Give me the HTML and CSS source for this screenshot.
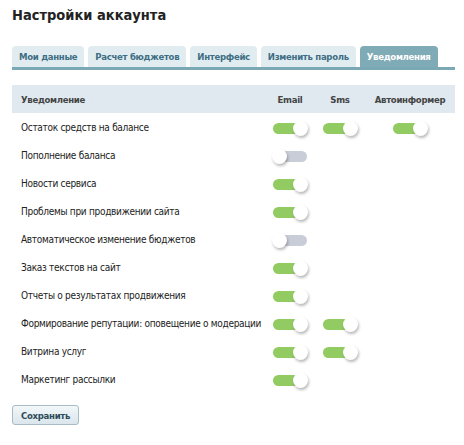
FILE: index.html
```html
<!DOCTYPE html>
<html lang="ru">
<head>
<meta charset="utf-8">
<link rel="stylesheet" href="styles.css">
</head>
<body>
<div class="page">
  <h1 class="title">Настройки аккаунта</h1>
  <div class="tabs">
    <div class="tab">Мои данные</div>
    <div class="tab">Расчет бюджетов</div>
    <div class="tab">Интерфейс</div>
    <div class="tab">Изменить пароль</div>
    <div class="tab active">Уведомления</div>
  </div>
  <table class="grid">
    <thead>
      <tr><th class="name">Уведомление</th><th class="c-email">Email</th><th class="c-sms">Sms</th><th class="c-auto">Автоинформер</th></tr>
    </thead>
    <tbody>
      <tr><td class="name">Остаток средств на балансе</td><td><span class="tg on"></span></td><td><span class="tg on"></span></td><td><span class="tg on"></span></td></tr>
      <tr><td class="name">Пополнение баланса</td><td><span class="tg"></span></td><td></td><td></td></tr>
      <tr><td class="name">Новости сервиса</td><td><span class="tg on"></span></td><td></td><td></td></tr>
      <tr><td class="name">Проблемы при продвижении сайта</td><td><span class="tg on"></span></td><td></td><td></td></tr>
      <tr><td class="name">Автоматическое изменение бюджетов</td><td><span class="tg"></span></td><td></td><td></td></tr>
      <tr><td class="name">Заказ текстов на сайт</td><td><span class="tg on"></span></td><td></td><td></td></tr>
      <tr><td class="name">Отчеты о результатах продвижения</td><td><span class="tg on"></span></td><td></td><td></td></tr>
      <tr><td class="name">Формирование репутации: оповещение о модерации</td><td><span class="tg on"></span></td><td><span class="tg on"></span></td><td></td></tr>
      <tr><td class="name">Витрина услуг</td><td><span class="tg on"></span></td><td><span class="tg on"></span></td><td></td></tr>
      <tr><td class="name">Маркетинг рассылки</td><td><span class="tg on"></span></td><td></td><td></td></tr>
    </tbody>
  </table>
  <button class="save">Сохранить</button>
</div>
</body>
</html>
```
FILE: styles.css
```css
html, body { margin: 0; padding: 0; background: #fff; }
body { font-family: "DejaVu Sans Condensed", "DejaVu Sans", sans-serif; font-size: 10px; letter-spacing: -0.3px; color: #222; }
.page { padding: 0 9px 0 12px; }
.title { margin: 0; padding-top: 6px; height: 30px; font-size: 14.5px; font-weight: bold; color: #222; line-height: 18px; letter-spacing: 0; }
.tabs { display: flex; gap: 4px; margin-top: 10px; border-bottom: 3px solid #7aa9b5; }
.tab { background: #e1ecf1; color: #3e6e84; font-weight: bold; font-size: 9.5px; letter-spacing: -0.3px; padding: 0 7px; height: 21px; line-height: 21px; border-radius: 4px 4px 0 0; white-space: nowrap; }
.tab.active { background: #7fabb6; color: #fff; }
.grid { width: 443px; border-collapse: collapse; margin-top: 15px; }
.grid th { background: #dfe9ef; color: #444; font-weight: bold; font-size: 9.5px; letter-spacing: -0.3px; height: 28px; padding: 0; text-align: center; white-space: nowrap; }
.grid th.name { text-align: left; padding-left: 9px; }
.grid td { height: 28px; padding: 0; text-align: center; vertical-align: middle; }
.grid td.name { text-align: left; padding-left: 9px; white-space: nowrap; }
.c-email { width: 50px; }
.c-sms { width: 50px; }
.c-auto { width: 90px; }
.tg { display: inline-block; position: relative; width: 34px; height: 11px; border-radius: 6px; background: #c9cdd7; vertical-align: middle; margin-top: 2px; }
.tg.on { background: #92cb62; }
.tg::after { content: ""; position: absolute; top: -2px; left: -1px; width: 15px; height: 15px; border-radius: 50%; background: #fff; box-shadow: 1px 2px 3px rgba(0,0,0,0.28); }
.tg.on::after { left: auto; right: -1px; }
.save { margin-top: 12px; font-family: inherit; font-size: 9.5px; letter-spacing: -0.3px; font-weight: bold; color: #2d4a5a; background: linear-gradient(#f2f7f9, #dae6ec); border: 1px solid #a9bcc6; border-radius: 3px; height: 20px; padding: 0 8px; }
```
